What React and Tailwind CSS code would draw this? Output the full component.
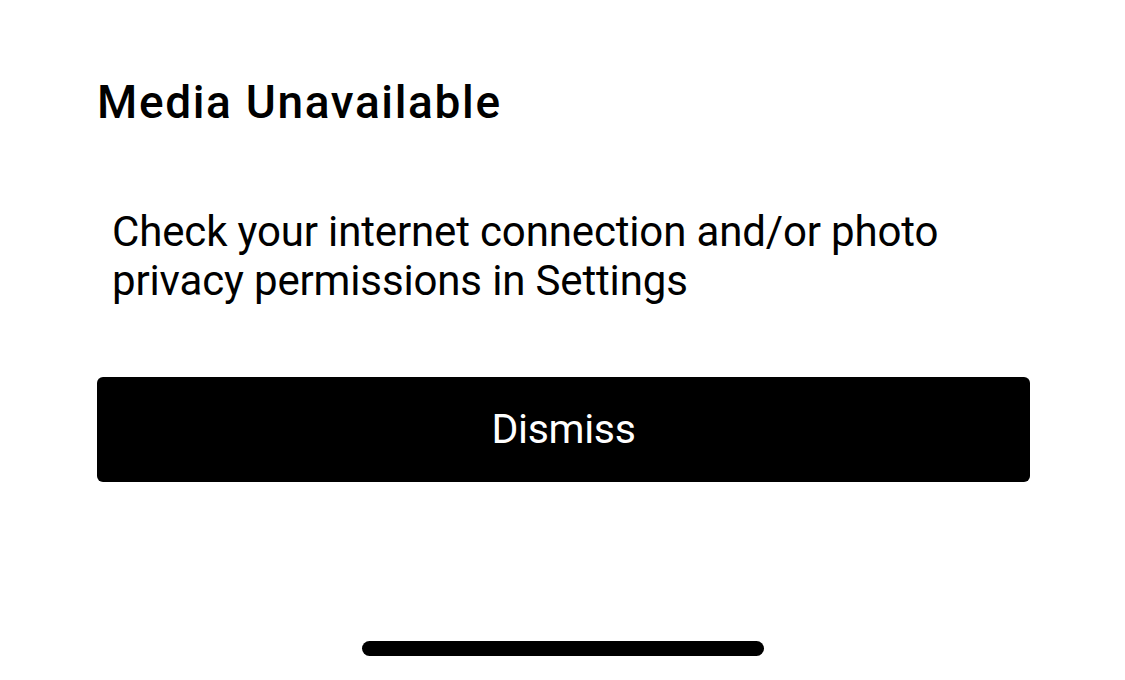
import React from 'react';

const App = () => {
  return (
    <div
      className="w-[1125px] h-[680px] bg-white text-black flex flex-col"
      style={{ fontFamily: 'Roboto, "Liberation Sans", Arial, sans-serif' }}
    >
      <div className="pl-[97px] pr-[96px] pt-[76px] flex flex-col">
        <h1 className="text-[46px] leading-[52px] font-medium tracking-[1.65px]">Media Unavailable</h1>
        <p className="pl-[15px] mt-[79px] text-[42px] leading-[49px] tracking-[-0.15px]">
          Check your internet connection and/or photo
          <br />
          privacy permissions in Settings
        </p>
        <button className="mt-[72px] w-[933px] h-[105px] rounded-[6px] bg-black text-white text-[41px] tracking-[-0.3px]">
          Dismiss
        </button>
      </div>
      <div className="flex justify-center mt-auto mb-[24px]">
        <div className="w-[402px] h-[15px] rounded-full bg-black"></div>
      </div>
    </div>
  );
};

export default App;
